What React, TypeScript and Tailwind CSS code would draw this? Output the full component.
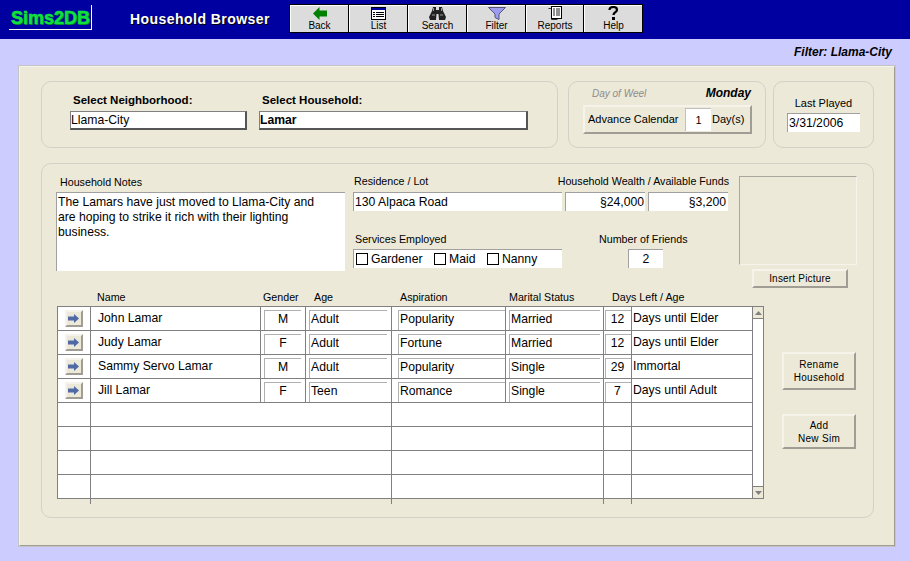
import type { ReactNode } from "react";

const navItems = ["Back", "List", "Search", "Filter", "Reports", "Help"];

const sims = [
  { name: "John Lamar", gender: "M", age: "Adult", aspiration: "Popularity", status: "Married", days: "12", note: "Days until Elder" },
  { name: "Judy Lamar", gender: "F", age: "Adult", aspiration: "Fortune", status: "Married", days: "12", note: "Days until Elder" },
  { name: "Sammy Servo Lamar", gender: "M", age: "Adult", aspiration: "Popularity", status: "Single", days: "29", note: "Immortal" },
  { name: "Jill Lamar", gender: "F", age: "Teen", aspiration: "Romance", status: "Single", days: "7", note: "Days until Adult" },
];

function NavIcon({ name }: { name: string }) {
  if (name === "Back") {
    return (
      <svg width="14" height="13" viewBox="0 0 14 13">
        <path d="M0 6.500 6.500 0v3.500H14v6H6.500V13z" fill="#008000" />
      </svg>
    );
  }
  if (name === "List") {
    return (
      <svg width="15" height="13" viewBox="0 0 15 13">
        <rect x="0.500" y="0.500" width="14" height="12" fill="#fff" stroke="#000" />
        <rect x="1" y="1" width="13" height="2" fill="#0000a0" />
        <path d="M2 5.500h2M5 5.500h8M2 7.500h2M5 7.500h8M2 9.500h2M5 9.500h8" stroke="#000" />
      </svg>
    );
  }
  if (name === "Search") {
    return (
      <svg width="17" height="13" viewBox="0 0 17 13">
        <path d="M4 0h3v3h3V0h3l1 4 3 6-1 3H10L9.500 7h-2L7 13H1L0 10l3-6z" fill="#222" />
        <path d="M4.500 1v3M12.500 1v3M3 8h3M11 8h3" stroke="#999" />
      </svg>
    );
  }
  if (name === "Filter") {
    return (
      <svg width="18" height="13" viewBox="0 0 18 13">
        <path d="M0.500 0.500h17L11 7v5.500L7 10.500V7z" fill="#9c9cf0" stroke="#55557a" />
      </svg>
    );
  }
  if (name === "Reports") {
    return (
      <svg width="14" height="14" viewBox="0 0 14 14">
        <path d="M0.500 2.500h3v11h6" fill="#ddd" stroke="#333" />
        <rect x="3.500" y="0.500" width="10" height="12" fill="#fff" stroke="#000" />
        <path d="M5 3h2M8 3h4M5 5h2M8 5h4M5 7h2M8 7h4M5 9h2M8 9h4" stroke="#222" />
      </svg>
    );
  }
  return (
    <svg width="11" height="14" viewBox="0 0 11 14">
      <path d="M1.500 4C1.500 2 3.500 1 5.500 1s3.500 1 3.500 3-3.500 2.500-3.500 5" fill="none" stroke="#000" strokeWidth="2.200" />
      <rect x="4" y="11" width="3" height="3" fill="#000" />
    </svg>
  );
}

function Sunken({ className, children }: { className: string; children?: ReactNode }) {
  return (
    <div className={`bg-white border-t border-l border-[#a0a0a0] flex items-center text-[12.2px] leading-none text-black ${className}`}>
      {children}
    </div>
  );
}

function Raised({ className, children }: { className: string; children?: ReactNode }) {
  return (
    <div className={`bg-[#ece9d8] border-2 border-t-[#f6f4ea] border-l-[#f6f4ea] border-r-[#a09e94] border-b-[#a09e94] flex items-center justify-center text-black ${className}`}>
      {children}
    </div>
  );
}

function Check({ label, className }: { label: string; className: string }) {
  return (
    <div className={`flex items-center gap-[3px] ${className}`}>
      <div className="w-[12px] h-[12px] border border-black bg-white" />
      <span>{label}</span>
    </div>
  );
}

function SimRow({ sim }: { sim?: (typeof sims)[number] }) {
  const line = "border-r border-[#808080]";
  if (!sim) {
    return (
      <div className="flex h-[24px] border-b border-[#808080]">
        <div className={`w-[33px] ${line}`} />
        <div className={`w-[301px] ${line}`} />
        <div className={`w-[212px] ${line}`} />
        <div className={`w-[28px] ${line}`} />
        <div className="flex-1" />
      </div>
    );
  }
  return (
    <div className="flex h-[24px] border-b border-[#808080] text-[12.2px]">
      <div className={`w-[33px] flex items-center justify-center pr-[1px] ${line}`}>
        <div className="w-[18px] h-[17px] bg-[#ece9d8] border-2 border-t-[#f6f4ea] border-l-[#f6f4ea] border-r-[#a09e94] border-b-[#a09e94] flex items-center justify-center">
          <svg width="11" height="9" viewBox="0 0 11 9">
            <path d="M0 2.500h6V0l5 4.500L6 9V6.500H0z" fill="#4f6aa5" />
          </svg>
        </div>
      </div>
      <div className={`w-[170px] pl-[7px] flex items-center ${line}`}>{sim.name}</div>
      <div className={`w-[45px] pl-[3px] pt-[3px] ${line}`}>
        <div className="w-[37px] h-[20px] pb-[2px] border-t border-l border-[#b0b0b0] flex items-center justify-center">{sim.gender}</div>
      </div>
      <div className={`w-[86px] pl-[3px] pt-[3px] ${line}`}>
        <div className="w-[78px] h-[20px] pb-[2px] border-t border-l border-[#b0b0b0] flex items-center pl-[1px]">{sim.age}</div>
      </div>
      <div className={`w-[114px] pl-[6px] pt-[3px] ${line}`}>
        <div className="w-[107px] h-[20px] pb-[2px] border-t border-l border-[#b0b0b0] flex items-center pl-[1px]">{sim.aspiration}</div>
      </div>
      <div className={`w-[98px] pl-[3px] pt-[3px] ${line}`}>
        <div className="w-[91px] h-[20px] pb-[2px] border-t border-l border-[#b0b0b0] flex items-center pl-[1px]">{sim.status}</div>
      </div>
      <div className={`w-[28px] pl-[1px] pt-[3px] ${line}`}>
        <div className="w-[26px] h-[20px] pb-[2px] pr-[2px] border-t border-l border-[#b0b0b0] flex items-center justify-center">{sim.days}</div>
      </div>
      <div className="flex-1 pl-[1px] flex items-center">{sim.note}</div>
    </div>
  );
}

export default function App() {
  return (
    <div className="w-[910px] h-[561px] overflow-hidden bg-[#ccccff] font-['Liberation_Sans',Arial,sans-serif] text-black">
      {/* Header */}
      <div className="h-[39px] bg-[#0000a0] flex">
        <div className="ml-[9px] mt-[5px] w-[83px] h-[25px] border-r border-b border-white flex items-center pl-[2px] pt-[2px] text-[#10e040] font-bold text-[18px] leading-none [text-shadow:1px_1px_0_#007020] [-webkit-text-stroke:0.5px_#10e040]">
          Sims2DB
        </div>
        <div className="ml-[38px] mt-[11px] w-[159px] text-white font-bold text-[14px] leading-[17px] tracking-[0.45px] [text-shadow:1px_1px_0_#000]">
          Household Browser
        </div>
        <div className="mt-[4px] h-[29px] flex border border-black bg-black gap-[1px]">
          {navItems.map((item) => (
            <div
              key={item}
              className={`${item === "Reports" ? "w-[57px]" : "w-[58px]"} bg-[#dcdcdc] border-t border-l border-t-white border-l-white flex flex-col items-center justify-end pb-[1px] text-[10px] leading-[11px] text-black`}
            >
              <NavIcon name={item} />
              <span>{item}</span>
            </div>
          ))}
        </div>
      </div>

      {/* Filter line */}
      <div className="h-[26px] pr-[18px] flex items-center justify-end font-bold italic text-[12px]">Filter: Llama-City</div>

      {/* Main panel */}
      <div className="ml-[18px] w-[878px] h-[482px] border border-[#c4c4c4]">
        <div className="h-full bg-[#ece9d8] border border-t-[#f6f4ea] border-l-[#f6f4ea] border-r-[#a09e94] border-b-[#a09e94] pl-[21px] pt-[14px]">
          {/* Top groups */}
          <div className="flex h-[67px]">
            <div className="w-[517px] border border-[#d2d1c8] rounded-[10px] flex pl-[28px] pt-[11px]">
              <div className="w-[189px]">
                <div className="pl-[3px] font-bold text-[11.500px] leading-[15px] h-[18px]">Select Neighborhood:</div>
                <div className="w-[177px] h-[19px] bg-white border border-[#808080] border-r-2 border-b-2 border-r-[#555] border-b-[#555] flex items-center text-[12.2px]">
                  Llama-City
                </div>
              </div>
              <div>
                <div className="pl-[3px] font-bold text-[11.500px] leading-[15px] h-[18px]">Select Household:</div>
                <div className="w-[269px] h-[19px] bg-white border border-[#808080] border-r-2 border-b-2 border-r-[#555] border-b-[#555] flex items-center font-bold text-[12.2px]">
                  Lamar
                </div>
              </div>
            </div>
            <div className="ml-[10px] w-[198px] h-[67px] border border-[#d2d1c8] rounded-[10px] pl-[14px] pt-[3px]">
              <div className="flex items-center justify-between w-[168px] h-[16px]">
                <span className="pl-[9px] italic text-[10px] text-[#8c8c8c]">Day of Weel</span>
                <span className="font-bold italic text-[12px]">Monday</span>
              </div>
              <Raised className="w-[169px] h-[29px] mt-[4px] !justify-start pl-[3px] text-[11px]">
                <span className="w-[97px]">Advance Calendar</span>
                <div className="w-[26px] h-[23px] bg-white border-t border-l border-[#c0c0c0] flex items-center justify-center text-[11px]">1</div>
                <span className="ml-[1px]">Day(s)</span>
              </Raised>
            </div>
            <div className="ml-[7px] w-[101px] h-[67px] border border-[#d2d1c8] rounded-[10px] flex flex-col items-center pt-[14px]">
              <div className="text-[11px] leading-[14px] h-[17px]">Last Played</div>
              <Sunken className="w-[73px] h-[19px] pl-[1px]">3/31/2006</Sunken>
            </div>
          </div>

          {/* Household group */}
          <div className="mt-[15px] w-[833px] h-[355px] border border-[#d2d1c8] rounded-[10px] pl-[14px] pt-[12px]">
            <div className="flex h-[112px]">
              <div className="w-[297px]">
                <div className="pl-[4px] text-[10.700px] leading-[12px] h-[16px]">Household Notes</div>
                <div className="w-[289px] h-[79px] bg-white border-t border-l border-[#a0a0a0] pl-[1px] pt-[2px] text-[12.2px] leading-[15px]">
                  The Lamars have just moved to Llama-City and
                  <br />
                  are hoping to strike it rich with their lighting
                  <br />
                  business.
                </div>
              </div>
              <div className="w-[386px]">
                <div className="flex justify-between w-[376px] h-[16px] text-[10.700px] leading-[10px] pl-[1px]">
                  <span>Residence / Lot</span>
                  <span>Household Wealth / Available Funds</span>
                </div>
                <div className="flex gap-[3px]">
                  <Sunken className="w-[209px] h-[19px] pl-[1px]">130 Alpaca Road</Sunken>
                  <Sunken className="w-[80px] h-[19px] justify-end pr-[1px]">§24,000</Sunken>
                  <Sunken className="w-[80px] h-[19px] justify-end pr-[2px]">§3,200</Sunken>
                </div>
                <div className="flex mt-[22px] text-[10.700px] leading-[12px] h-[16px]">
                  <span className="w-[246px] pl-[2px]">Services Employed</span>
                  <span>Number of Friends</span>
                </div>
                <div className="flex">
                  <Sunken className="w-[209px] h-[19px] pl-[2px]">
                    <Check label="Gardener" className="w-[78px]" />
                    <Check label="Maid" className="w-[53px]" />
                    <Check label="Nanny" className="w-[60px]" />
                  </Sunken>
                  <Sunken className="ml-[66px] w-[35px] h-[19px] justify-center">2</Sunken>
                </div>
              </div>
              <div className="w-[118px] flex flex-col">
                <div className="w-[118px] h-[89px] border border-[#a9a89e] border-r-[#f6f4ea] border-b-[#f6f4ea]" />
                <Raised className="mt-[4px] ml-[13px] w-[96px] h-[19px] text-[10px] tracking-[0.2px]">Insert Picture</Raised>
              </div>
            </div>

            {/* Sim table */}
            <div className="flex mt-[3px] h-[15px] text-[10.700px] leading-[12px]">
              <span className="w-[41px]" />
              <span className="w-[166px]">Name</span>
              <span className="w-[51px]">Gender</span>
              <span className="w-[86px]">Age</span>
              <span className="w-[109px]">Aspiration</span>
              <span className="w-[103px]">Marital Status</span>
              <span>Days Left / Age</span>
            </div>
            <div className="flex items-start ml-[1px]">
              <div className="w-[707px] h-[198px]">
                <div className="w-[707px] h-[193px] bg-white border border-[#808080] flex">
                  <div className="w-[694px]">
                    {sims.map((sim) => (
                      <SimRow key={sim.name} sim={sim} />
                    ))}
                    <SimRow />
                    <SimRow />
                    <SimRow />
                    <div className="flex h-[23px]">
                      <div className="w-[33px] border-r border-[#808080]" />
                      <div className="w-[301px] border-r border-[#808080]" />
                      <div className="w-[212px] border-r border-[#808080]" />
                      <div className="w-[28px] border-r border-[#808080]" />
                    </div>
                  </div>
                  <div className="flex-1 border-l border-[#808080] flex flex-col justify-between">
                    <div className="h-[12px] bg-[#ece9d8] border-b border-[#808080] flex items-center justify-center">
                      <svg width="7" height="4" viewBox="0 0 7 4"><path d="M3.500 0 7 4H0z" fill="#808080" /></svg>
                    </div>
                    <div className="h-[12px] bg-[#ece9d8] border-t border-[#808080] flex items-center justify-center">
                      <svg width="7" height="4" viewBox="0 0 7 4"><path d="M3.500 4 7 0H0z" fill="#808080" /></svg>
                    </div>
                  </div>
                </div>
                {/* Column lines run a little past the table */}
                <div className="flex h-[5px] pl-[1px]">
                  <div className="w-[33px] border-r border-[#808080]" />
                  <div className="w-[301px] border-r border-[#808080]" />
                  <div className="w-[212px] border-r border-[#808080]" />
                  <div className="w-[28px] border-r border-[#808080]" />
                </div>
              </div>
              <div className="ml-[18px] pt-[46px] flex flex-col gap-[24px] text-[10px] leading-[13px] text-center tracking-[0.3px]">
                <Raised className="w-[74px] h-[38px]">
                  <span>
                    Rename
                    <br />
                    Household
                  </span>
                </Raised>
                <Raised className="w-[74px] h-[35px]">
                  <span>
                    Add
                    <br />
                    New Sim
                  </span>
                </Raised>
              </div>
            </div>
          </div>
        </div>
      </div>
    </div>
  );
}
